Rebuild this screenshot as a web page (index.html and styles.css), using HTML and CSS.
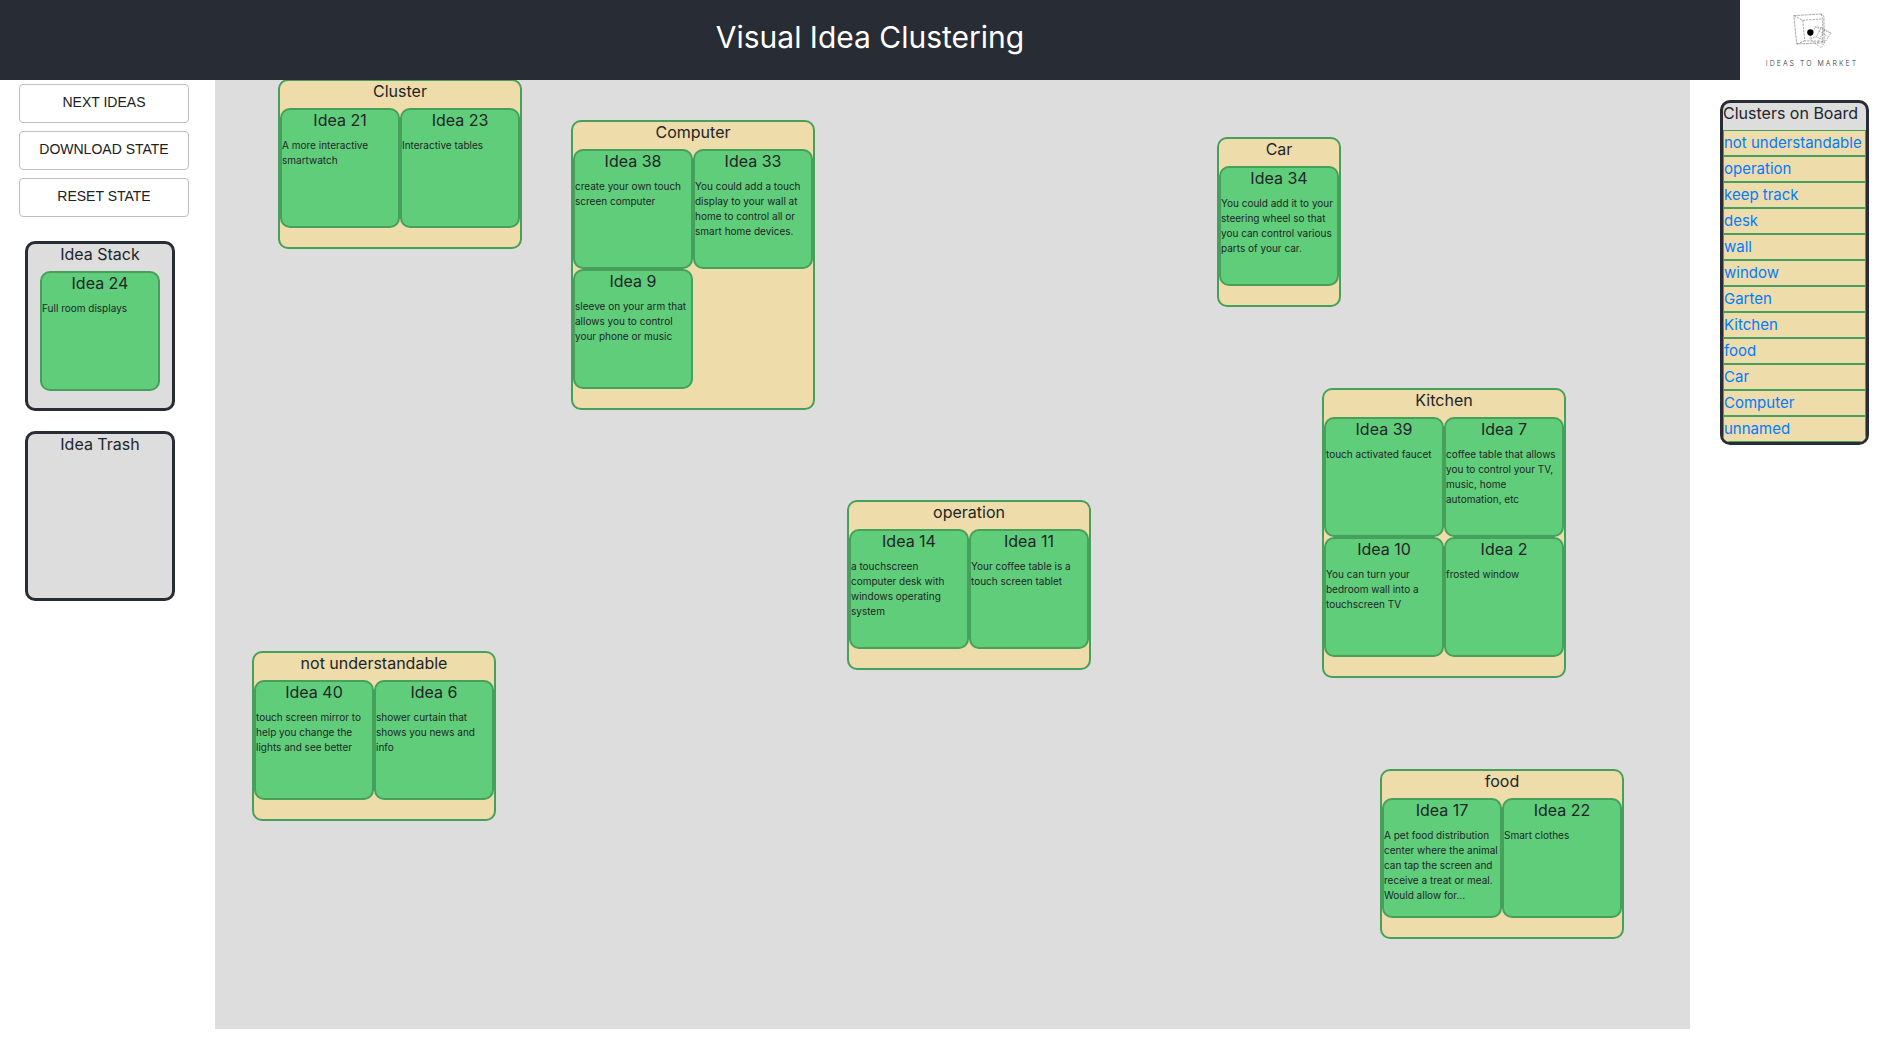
FILE: index.html
```html
<!DOCTYPE html>
<html lang="en">
<head>
<meta charset="utf-8">
<meta name="viewport" content="width=device-width, initial-scale=1">
<title>Visual Idea Clustering</title>
<link rel="stylesheet" href="styles.css">
</head>
<body>
<header class="topbar">
  <h1 class="topbar-title">Visual Idea Clustering</h1>
  <div class="logo">
    <svg class="logo-mark" viewBox="0 0 120 112" aria-hidden="true">
      <g fill="none" stroke="#555" stroke-width="1.5">
        <path d="M5 8 88 3 96 10 97 90 14 94Z" stroke-dasharray="9 2"/>
        <path d="M5 8 32 22 91 18M32 22 38 84 94 86M88 3 92 18 92 88M14 94 38 84" stroke-dasharray="7 3"/>
        <path d="M70 42 118 61 87 106 53 78ZM70 42 88 44 73 72 53 78M88 44 118 61M73 72 100 84M80 54 110 72M98 50 76 92" stroke-dasharray="4 3"/>
      </g>
      <circle cx="55" cy="59" r="9.5" fill="#000"/>
    </svg>
    <span class="logo-text">IDEAS TO MARKET</span>
  </div>
</header>
<div class="workspace">
  <aside class="tools">
    <div class="actions">
      <button class="action" type="button">NEXT IDEAS</button>
      <button class="action" type="button">DOWNLOAD STATE</button>
      <button class="action" type="button">RESET STATE</button>
    </div>
    <section class="bin">
      <h2 class="heading">Idea Stack</h2>
      <article class="idea"><h3 class="heading">Idea 24</h3><p class="idea-text">Full room displays</p></article>
    </section>
    <section class="bin">
      <h2 class="heading">Idea Trash</h2>
    </section>
  </aside>
  <main class="board">
    <section class="cluster" style="left:63px;top:-1px">
      <h2 class="heading">Cluster</h2>
      <div class="ideas">
        <article class="idea"><h3 class="heading">Idea 21</h3><p class="idea-text">A more interactive smartwatch</p></article>
        <article class="idea"><h3 class="heading">Idea 23</h3><p class="idea-text">Interactive tables</p></article>
      </div>
    </section>
    <section class="cluster" style="left:356px;top:40px">
      <h2 class="heading">Computer</h2>
      <div class="ideas">
        <article class="idea"><h3 class="heading">Idea 38</h3><p class="idea-text">create your own touch screen computer</p></article>
        <article class="idea"><h3 class="heading">Idea 33</h3><p class="idea-text">You could add a touch display to your wall at home to control all or smart home devices.</p></article>
        <article class="idea"><h3 class="heading">Idea 9</h3><p class="idea-text">sleeve on your arm that allows you to control your phone or music</p></article>
      </div>
    </section>
    <section class="cluster" style="left:1002px;top:57px">
      <h2 class="heading">Car</h2>
      <div class="ideas ideas-single">
        <article class="idea"><h3 class="heading">Idea 34</h3><p class="idea-text">You could add it to your steering wheel so that you can control various parts of your car.</p></article>
      </div>
    </section>
    <section class="cluster" style="left:1107px;top:308px">
      <h2 class="heading">Kitchen</h2>
      <div class="ideas">
        <article class="idea"><h3 class="heading">Idea 39</h3><p class="idea-text">touch activated faucet</p></article>
        <article class="idea"><h3 class="heading">Idea 7</h3><p class="idea-text">coffee table that allows you to control your TV, music, home automation, etc</p></article>
        <article class="idea"><h3 class="heading">Idea 10</h3><p class="idea-text">You can turn your bedroom wall into a touchscreen TV</p></article>
        <article class="idea"><h3 class="heading">Idea 2</h3><p class="idea-text">frosted window</p></article>
      </div>
    </section>
    <section class="cluster" style="left:632px;top:420px">
      <h2 class="heading">operation</h2>
      <div class="ideas">
        <article class="idea"><h3 class="heading">Idea 14</h3><p class="idea-text">a touchscreen computer desk with windows operating system</p></article>
        <article class="idea"><h3 class="heading">Idea 11</h3><p class="idea-text">Your coffee table is a touch screen tablet</p></article>
      </div>
    </section>
    <section class="cluster" style="left:37px;top:571px">
      <h2 class="heading">not understandable</h2>
      <div class="ideas">
        <article class="idea"><h3 class="heading">Idea 40</h3><p class="idea-text">touch screen mirror to help you change the lights and see better</p></article>
        <article class="idea"><h3 class="heading">Idea 6</h3><p class="idea-text">shower curtain that shows you news and info</p></article>
      </div>
    </section>
    <section class="cluster" style="left:1165px;top:689px">
      <h2 class="heading">food</h2>
      <div class="ideas">
        <article class="idea"><h3 class="heading">Idea 17</h3><p class="idea-text">A pet food distribution center where the animal can tap the screen and receive a treat or meal. Would allow for...</p></article>
        <article class="idea"><h3 class="heading">Idea 22</h3><p class="idea-text">Smart clothes</p></article>
      </div>
    </section>
  </main>
  <nav class="index" aria-labelledby="index-title">
    <div class="index-box">
      <h2 class="heading heading-start" id="index-title">Clusters on Board</h2>
      <ul class="index-list">
        <li class="index-item"><a class="index-link" href="#">not understandable</a></li>
        <li class="index-item"><a class="index-link" href="#">operation</a></li>
        <li class="index-item"><a class="index-link" href="#">keep track</a></li>
        <li class="index-item"><a class="index-link" href="#">desk</a></li>
        <li class="index-item"><a class="index-link" href="#">wall</a></li>
        <li class="index-item"><a class="index-link" href="#">window</a></li>
        <li class="index-item"><a class="index-link" href="#">Garten</a></li>
        <li class="index-item"><a class="index-link" href="#">Kitchen</a></li>
        <li class="index-item"><a class="index-link" href="#">food</a></li>
        <li class="index-item"><a class="index-link" href="#">Car</a></li>
        <li class="index-item"><a class="index-link" href="#">Computer</a></li>
        <li class="index-item"><a class="index-link" href="#">unnamed</a></li>
      </ul>
    </div>
  </nav>
</div>
</body>
</html>
```
FILE: styles.css
```css
*, *::before, *::after { box-sizing: border-box; }

body {
  margin: 0;
  background: #fff;
  color: #212529;
  font-family: Inter, "Liberation Sans", sans-serif;
  font-size: 16px;
  line-height: 24px;
}

h1, h2, h3, p, ul { margin: 0; padding: 0; }

.topbar {
  position: relative;
  z-index: 1;
  display: flex;
  height: 80px;
  background: #282c34;
}

.topbar-title {
  flex: 1;
  padding-top: 18px;
  color: #fff;
  font-size: 30px;
  font-weight: 400;
  line-height: 38px;
  text-align: center;
}

.logo {
  display: flex;
  flex-direction: column;
  align-items: center;
  gap: 10px;
  width: 144px;
  padding-top: 13px;
  background: #fff;
}

.logo-mark { width: 40px; height: 37px; }

.logo-text {
  color: #333;
  font-size: 7px;
  font-weight: 300;
  line-height: 8px;
  letter-spacing: 2px;
  white-space: nowrap;
}

.workspace {
  display: grid;
  grid-template-columns: 215px 1fr 194px;
  align-items: start;
}

.tools {
  display: flex;
  flex-direction: column;
  gap: 20px;
  padding: 4px 26px 0 19px;
}

.actions {
  display: flex;
  flex-direction: column;
  gap: 8px;
  padding-bottom: 4px;
}

.action {
  height: 39px;
  padding: 0 0 4px;
  border: 1px solid #bfbfbf;
  border-radius: 4px;
  background: #fff;
  color: #212121;
  font-family: "Liberation Sans", Arial, sans-serif;
  font-size: 14px;
}

.bin {
  width: 150px;
  min-height: 170px;
  margin-left: 6px;
  padding: 0 12px;
  border: 3px solid #282c34;
  border-radius: 10px;
  background: #ddd;
}

.heading {
  margin-bottom: 6px;
  font-size: 16px;
  font-weight: 400;
  line-height: 21px;
  text-align: center;
}

.heading-start { text-align: left; }

.board {
  position: relative;
  height: 90vh;
  background: #ddd;
}

.cluster {
  position: absolute;
  padding-bottom: 19px;
  border: 2px solid #469f5b;
  border-radius: 10px;
  background: #eedcaa;
}

.ideas {
  display: grid;
  grid-template-columns: 120px 120px;
}

.ideas-single { grid-template-columns: 120px; }

.idea {
  width: 120px;
  height: 120px;
  border: 2px solid #469f5b;
  border-radius: 10px;
  background: #5fcd79;
}

.idea-text {
  padding: 1px 1px 0 0;
  font-size: 10px;
  line-height: 15px;
}

.index { padding: 20px 15px 0 30px; }

.index-box {
  border: 3px solid #282c34;
  border-radius: 10px;
  background: #ddd;
  overflow: hidden;
}

.index-list { list-style: none; }

.index-item {
  border: 1px solid #469f5b;
  background: #eedcaa;
  white-space: nowrap;
}

.index-link {
  display: block;
  color: #007bff;
  font-size: 15px;
  text-decoration: none;
}
```
